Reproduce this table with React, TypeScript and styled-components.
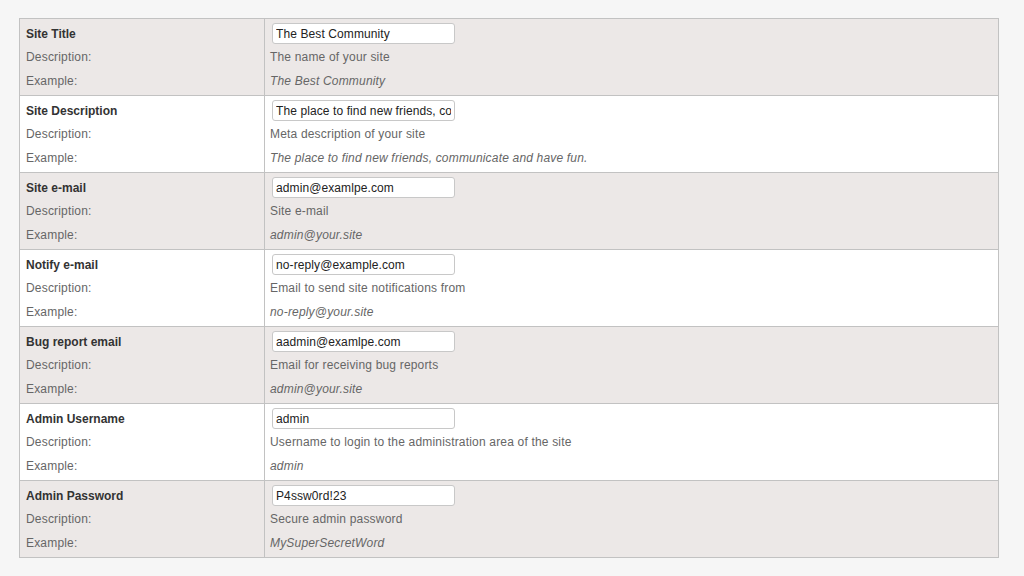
import React from "react";
import styled, { createGlobalStyle } from "styled-components";

const GlobalStyle = createGlobalStyle`
  html, body {
    margin: 0;
    padding: 0;
    background: #f6f6f6;
    font-family: "Liberation Sans", Arial, sans-serif;
  }
`;

const Page = styled.div`
  padding: 18px 0 0 19px;
`;

const Table = styled.table`
  width: 980px;
  border-collapse: collapse;
  border: 1px solid #c2c2c2;
  font-size: 12px;
`;

const Row = styled.tr<{ $shaded: boolean }>`
  background: ${(p) => (p.$shaded ? "#ece8e7" : "#ffffff")};
  border-top: 1px solid #c2c2c2;
`;

const LabelCell = styled.td`
  width: 232px;
  padding: 4px 6px 2px 6px;
  border-right: 1px solid #c2c2c2;
  vertical-align: top;
`;

const ValueCell = styled.td`
  padding: 4px 5px 2px 5px;
  vertical-align: top;
`;

const Line = styled.div`
  height: 24px;
  line-height: 24px;
  color: #666;
  letter-spacing: 0.18px;
  white-space: nowrap;
`;

const Title = styled(Line)`
  height: 22px;
  line-height: 22px;
  font-weight: bold;
  color: #333;
  letter-spacing: 0;
`;

const Sample = styled(Line)`
  font-style: italic;
`;

const InputLine = styled.div`
  height: 22px;
  display: flex;
  align-items: flex-start;
  padding-left: 2px;
`;

const Field = styled.input`
  box-sizing: border-box;
  width: 183px;
  height: 21px;
  margin: 0;
  padding: 0 3px;
  border: 1px solid #c8c8c8;
  border-radius: 3px;
  background: #fff;
  font-family: "Liberation Sans", Arial, sans-serif;
  font-size: 12px;
  letter-spacing: 0.1px;
  color: #222;
  outline: none;
`;

const settings = [
  {
    title: "Site Title",
    value: "The Best Community",
    description: "The name of your site",
    example: "The Best Community",
  },
  {
    title: "Site Description",
    value: "The place to find new friends, communicate and have fun.",
    description: "Meta description of your site",
    example: "The place to find new friends, communicate and have fun.",
  },
  {
    title: "Site e-mail",
    value: "admin@examlpe.com",
    description: "Site e-mail",
    example: "admin@your.site",
  },
  {
    title: "Notify e-mail",
    value: "no-reply@example.com",
    description: "Email to send site notifications from",
    example: "no-reply@your.site",
  },
  {
    title: "Bug report email",
    value: "aadmin@examlpe.com",
    description: "Email for receiving bug reports",
    example: "admin@your.site",
  },
  {
    title: "Admin Username",
    value: "admin",
    description: "Username to login to the administration area of the site",
    example: "admin",
  },
  {
    title: "Admin Password",
    value: "P4ssw0rd!23",
    description: "Secure admin password",
    example: "MySuperSecretWord",
  },
];

export default function App() {
  return (
    <>
      <GlobalStyle />
      <Page>
        <Table>
          <tbody>
            {settings.map((s, i) => (
              <Row key={s.title} $shaded={i % 2 === 0}>
                <LabelCell>
                  <Title>{s.title}</Title>
                  <Line>Description:</Line>
                  <Line>Example:</Line>
                </LabelCell>
                <ValueCell>
                  <InputLine>
                    <Field type="text" defaultValue={s.value} />
                  </InputLine>
                  <Line>{s.description}</Line>
                  <Sample>{s.example}</Sample>
                </ValueCell>
              </Row>
            ))}
          </tbody>
        </Table>
      </Page>
    </>
  );
}
